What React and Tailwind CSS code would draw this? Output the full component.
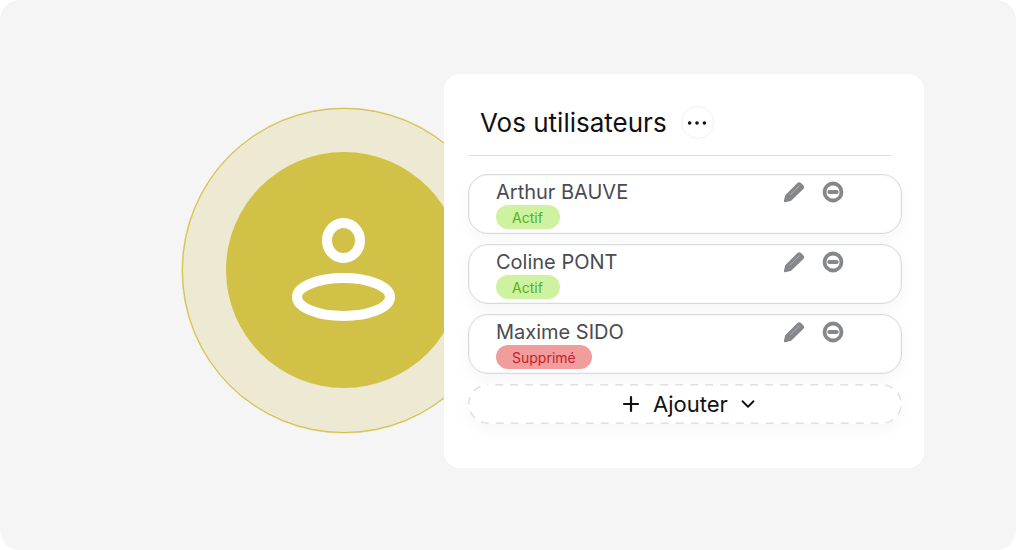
import React from "react";
import { Plus, ChevronDown } from "lucide-react";

const users = [
  { name: "Arthur BAUVE", status: "Actif" },
  { name: "Coline PONT", status: "Actif" },
  { name: "Maxime SIDO", status: "Supprimé" },
];

function PersonIcon() {
  return (
    <svg width="104" height="104" viewBox="0 0 104 104" fill="none" stroke="white" strokeWidth="10">
      <ellipse cx="51.5" cy="22.5" rx="16.5" ry="17.5" />
      <ellipse cx="51.5" cy="79" rx="46.5" ry="19" />
    </svg>
  );
}

function PencilIcon() {
  return (
    <svg width="22" height="22" viewBox="0 0 22 22" fill="#85878a">
      <path d="M14.4 2a2.6 2.6 0 0 1 3.6 0l2.3 2.3a2.6 2.6 0 0 1 0 3.6L8.4 19.4c-.3.3-.7.5-1.1.6l-4.9 1.2c-.9.2-1.7-.6-1.5-1.5l1.2-4.9c.1-.4.3-.8.6-1.1z" />
      <path d="M16.8 4.4 7 14.2" stroke="white" strokeWidth="1" opacity="0.35" />
    </svg>
  );
}

function MinusCircleIcon() {
  return (
    <svg width="22" height="22" viewBox="0 0 22 22" fill="none">
      <circle cx="11" cy="11" r="8.5" stroke="#85878a" strokeWidth="3.8" />
      <path d="M7.2 11h7.6" stroke="#85878a" strokeWidth="3.8" strokeLinecap="round" />
    </svg>
  );
}

function UserRow({ name, status }) {
  const active = status === "Actif";
  return (
    <div className="flex h-[60px] w-[434px] rounded-[20px] border border-[#d8dbde] bg-white pl-[27px] shadow-[inset_0_0_0_1px_rgba(220,223,226,0.25),0_6px_16px_rgba(0,0,0,0.04)]">
      <div className="flex w-[287px] flex-col items-start pt-[3px]">
        <span className="text-[20px] leading-[28px] text-[#4a4b50]">{name}</span>
        <span
          className={
            active
              ? "mt-[-1px] h-[24px] w-[64px] rounded-full bg-[#cef2a0] px-4 pt-[1px] text-[14px] leading-[24px] text-[#4cb523]"
              : "mt-[-1px] h-[24px] rounded-full bg-[#f29d9d] px-4 pt-[1px] text-[14px] leading-[24px] text-[#c5222b]"
          }
        >
          {status}
        </span>
      </div>
      <div className="flex h-fit items-center gap-[17px] pt-[6px]">
        <PencilIcon />
        <MinusCircleIcon />
      </div>
    </div>
  );
}

export default function App() {
  return (
    <div className="flex h-[550px] w-[1016px] items-start rounded-[20px] bg-[#f5f5f5] pl-[182px] pt-[74px] font-['Inter',sans-serif]">
      <div className="mt-[34px] flex h-[325px] w-[324px] shrink-0 items-center justify-center rounded-full border-[1px] border-[#d1c247] bg-[#ede9d2] pb-[1px] shadow-[0_0_0_0.5px_rgba(209,194,71,0.6)]">
        <div className="flex h-[236px] w-[236px] items-center justify-center rounded-full bg-[#d1c247]">
          <PersonIcon />
        </div>
      </div>

      <div className="relative ml-[-62px] flex h-[394px] w-[480px] shrink-0 flex-col rounded-[16px] bg-white pl-6">
        <div className="flex h-[82px] w-[424px] items-end border-b border-[#dcdfe2] pb-[16px] pl-3">
          <div className="flex items-center gap-[14px]">
            <span className="text-[26px] leading-[32px] text-[#111111]">Vos utilisateurs</span>
            <span className="flex h-[33px] w-[33px] items-center justify-center rounded-full border border-[#f0f0f0] bg-white">
              <svg width="20" height="6" viewBox="0 0 20 6" fill="#111111">
                <circle cx="2.6" cy="3" r="1.8" />
                <circle cx="10" cy="3" r="1.8" />
                <circle cx="17.4" cy="3" r="1.8" />
              </svg>
            </span>
          </div>
        </div>

        <div className="mt-[18px] flex flex-col gap-[10px]">
          {users.map((u) => (
            <UserRow key={u.name} name={u.name} status={u.status} />
          ))}
          <button className="relative flex h-[40px] w-[434px] items-center justify-center rounded-[20px] bg-white pl-[9px] text-[22px] text-[#111111] shadow-[0_6px_16px_rgba(0,0,0,0.035)]">
            <svg className="absolute inset-0" width="434" height="40" fill="none">
              <rect x="0.75" y="0.75" width="432.5" height="38.5" rx="19.5" stroke="#e0e0e0" strokeWidth="1.5" strokeDasharray="8 7" strokeDashoffset="8" />
            </svg>
            <Plus size={24} strokeWidth={2.2} />
            <span className="ml-[10px]">Ajouter</span>
            <ChevronDown size={22} strokeWidth={2} className="ml-[9px] mr-[1px]" />
          </button>
        </div>
      </div>
    </div>
  );
}
